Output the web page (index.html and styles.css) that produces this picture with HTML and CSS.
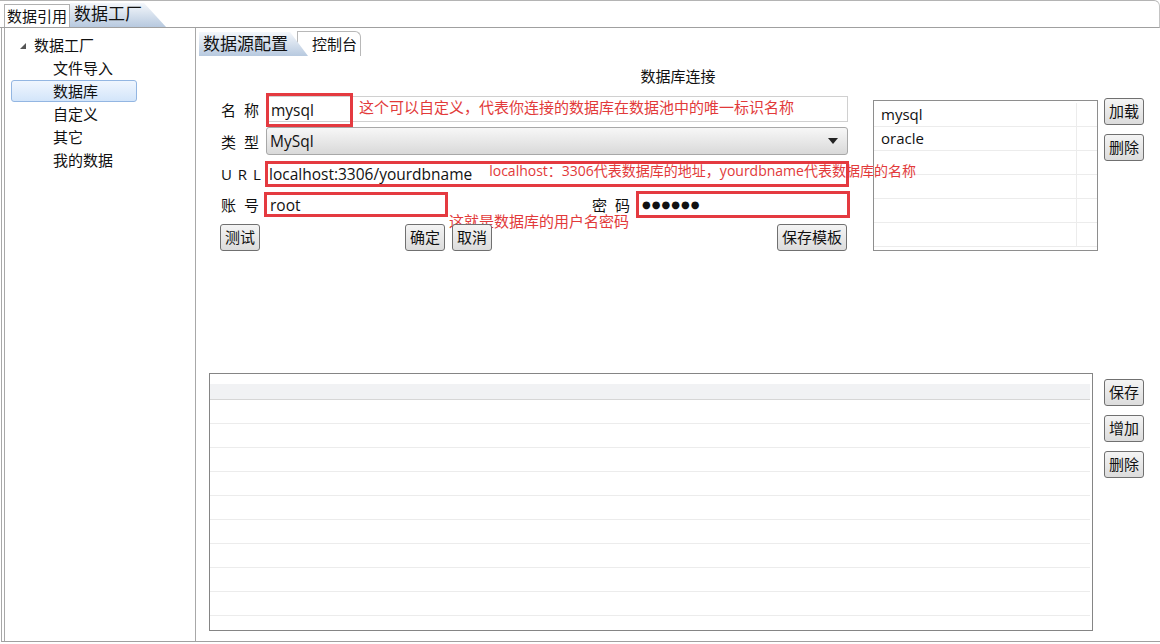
FILE: index.html
```html
<!DOCTYPE html>
<html lang="zh-CN">
<head>
    <meta charset="UTF-8">
    <title>数据工厂</title>
    <link rel="stylesheet" href="styles.css">
</head>
<body>

<div class="window">
    <div class="tabs">
        <div class="tab">数据引用</div>
        <div class="tab active">数据工厂</div>
    </div>

    <div class="body">
        <aside class="nav">
            <div class="tree-row tree-root"><span class="arrow"></span>数据工厂</div>
            <div class="tree-row tree-item">文件导入</div>
            <div class="tree-row tree-item selected">数据库</div>
            <div class="tree-row tree-item">自定义</div>
            <div class="tree-row tree-item">其它</div>
            <div class="tree-row tree-item">我的数据</div>
        </aside>

        <main class="work">
            <div class="subtabs">
                <div class="subtab active">数据源配置</div>
                <div class="subtab">控制台</div>
            </div>

            <div class="page">
                <h2 class="title">数据库连接</h2>

                <div class="conn">
                    <div class="form">
                        <div class="row r1">
                            <span class="label">名 称</span>
                            <div class="field plain">
                                <span class="mark">mysql</span>
                                <span class="note">这个可以自定义，代表你连接的数据库在数据池中的唯一标识名称</span>
                            </div>
                        </div>
                        <div class="row r2">
                            <span class="label">类 型</span>
                            <div class="field select">MySql<span class="caret"></span></div>
                        </div>
                        <div class="row r3">
                            <span class="label latin">U R L</span>
                            <div class="field marked url">
                                localhost:3306/yourdbname
                                <span class="note small">localhost：3306代表数据库的地址，yourdbname代表数据库的名称</span>
                            </div>
                        </div>
                        <div class="row r4">
                            <span class="label">账 号</span>
                            <div class="field marked account">root</div>
                            <span class="label right">密 码</span>
                            <div class="field marked pass"><span class="dots">●●●●●●</span></div>
                            <span class="note below">这就是数据库的用户名密码</span>
                        </div>
                        <div class="row r5">
                            <button class="btn">测试</button>
                            <button class="btn ok">确定</button>
                            <button class="btn cancel">取消</button>
                            <button class="btn save">保存模板</button>
                        </div>
                    </div>

                    <div class="list">
                        <div class="list-row"><span class="name">mysql</span><span class="col"></span></div>
                        <div class="list-row"><span class="name">oracle</span><span class="col"></span></div>
                        <div class="list-row"><span class="name"></span><span class="col"></span></div>
                        <div class="list-row"><span class="name"></span><span class="col"></span></div>
                        <div class="list-row"><span class="name"></span><span class="col"></span></div>
                        <div class="list-row"><span class="name"></span><span class="col"></span></div>
                    </div>

                    <div class="side top-side">
                        <button class="btn">加载</button>
                        <button class="btn">删除</button>
                    </div>
                </div>

                <div class="data">
                    <div class="table">
                        <div class="thead"></div>
                        <div class="trow"></div>
                        <div class="trow"></div>
                        <div class="trow"></div>
                        <div class="trow"></div>
                        <div class="trow"></div>
                        <div class="trow"></div>
                        <div class="trow"></div>
                        <div class="trow"></div>
                        <div class="trow"></div>
                    </div>
                    <div class="side low-side">
                        <button class="btn">保存</button>
                        <button class="btn">增加</button>
                        <button class="btn">删除</button>
                    </div>
                </div>
            </div>
        </main>
    </div>
</div>

</body>
</html>
```

FILE: styles.css
```css
* {
    margin: 0;
    padding: 0;
    box-sizing: border-box;
}

html, body {
    width: 1160px;
    height: 644px;
    overflow: hidden;
    background-color: #fff;
    color: #111;
    font-family: "Open Sans", "Noto Sans CJK SC", sans-serif;
}

.window {
    height: 642px;
    display: flex;
    flex-direction: column;
}

/* top tabs */
.tabs {
    height: 28px;
    display: flex;
    align-items: flex-end;
    padding-left: 4px;
    border-top: 1px solid #b4b4b4;
    border-right: 1px solid #c4c4c4;
    border-bottom: 1px solid #a0a0a0;
    border-top-right-radius: 6px;
}

.tab {
    height: 23px;
    line-height: 22px;
    font-size: 15px;
    padding: 0 2px;
    background-color: #fff;
    border: 1px solid #b0b0b0;
    border-bottom: none;
}

.tab.active {
    height: 24px;
    font-size: 17px;
    padding: 0 24px 0 4px;
    border: none;
    background: linear-gradient(#f4f7fb, #b7c9df);
    clip-path: polygon(0 0, calc(100% - 22px) 0, 100% 100%, 0 100%);
}

.body {
    flex: 1;
    display: flex;
    margin-left: 1px;
    border-left: 1px solid #a8a8a8;
    border-bottom: 1px solid #a0a0a0;
}

/* left tree */
.nav {
    width: 192px;
    margin-left: 2px;
    padding-top: 6px;
    border-left: 1px solid #a8a8a8;
    border-right: 1px solid #a8a8a8;
}

.tree-row {
    height: 23px;
    line-height: 23px;
    font-size: 15px;
}

.tree-root {
    padding-left: 15px;
}

.arrow {
    display: inline-block;
    width: 0;
    height: 0;
    margin-right: 8px;
    vertical-align: 2px;
    border-left: 6px solid transparent;
    border-bottom: 6px solid #555;
}

.tree-item {
    padding-left: 48px;
}

.tree-item.selected {
    width: 126px;
    height: 22px;
    line-height: 20px;
    margin: 0 0 1px 6px;
    padding-left: 41px;
    border: 1px solid #93b6e2;
    border-radius: 3px;
    background: linear-gradient(#f0f6fe, #d3e5fa);
}

/* right side */
.work {
    flex: 1;
    display: flex;
    flex-direction: column;
}

.subtabs {
    height: 28px;
    display: flex;
    align-items: flex-end;
    padding-left: 3px;
}

.subtab {
    height: 25px;
    line-height: 24px;
    font-size: 15px;
    padding: 0 3px 0 14px;
    margin-left: -11px;
    background-color: #fff;
    border: 1px solid #b8b8b8;
    border-bottom: none;
    border-top-right-radius: 6px;
}

.subtab.active {
    position: relative;
    z-index: 1;
    height: 24px;
    margin-left: 0;
    font-size: 17px;
    padding: 0 20px 0 4px;
    border: none;
    border-radius: 0;
    background: linear-gradient(#f4f7fb, #b7c9df);
    clip-path: polygon(0 0, calc(100% - 18px) 0, 100% 100%, 0 100%);
}

.page {
    flex: 1;
}

.title {
    margin-top: 10px;
    text-align: center;
    font-size: 15px;
    font-weight: 400;
    line-height: 20px;
}

.conn {
    display: flex;
    align-items: flex-start;
    margin-top: 10px;
    padding-left: 20px;
}

.form {
    width: 634px;
}

.row {
    position: relative;
    display: flex;
    align-items: center;
}

.r1 { height: 26px; margin-bottom: 5px; }
.r2 { height: 28px; margin-bottom: 6px; }
.r3 { height: 26px; margin-bottom: 4px; }
.r4 { height: 27px; margin-bottom: 6px; }
.r5 { height: 27px; padding-left: 4px; }

.label {
    width: 50px;
    padding-left: 5px;
    font-size: 15px;
    letter-spacing: 2px;
    white-space: nowrap;
}

.label.latin {
    letter-spacing: 1px;
}

.label.right {
    width: auto;
    margin-left: auto;
    margin-right: 4px;
    padding-left: 0;
}

.field {
    width: 582px;
    height: 100%;
    display: flex;
    align-items: center;
    padding-left: 3px;
    font-size: 15.5px;
    white-space: nowrap;
    border: 1px solid #d0d0d0;
}

.field.plain {
    padding-left: 0;
}

.mark {
    flex-shrink: 0;
    width: 87px;
    height: 34px;
    margin: 0 0 -1px -1px;
    padding-left: 2px;
    display: flex;
    align-items: center;
    border: 3px solid #e43a40;
}

.note {
    flex-shrink: 0;
    margin-left: 6px;
    color: #e23a3a;
    font-size: 15px;
    line-height: 18px;
    margin-top: -4px;
}

.note.small {
    margin-left: 17px;
    font-size: 14px;
    margin-top: -6px;
}

.note.below {
    position: absolute;
    left: 233px;
    top: 21px;
    margin: 0;
}

.field.select {
    height: 28px;
    border: 1px solid #a8a8a8;
    border-radius: 3px;
    background: linear-gradient(#f7f7f7, #d9d9d9);
}

.caret {
    width: 0;
    height: 0;
    margin-left: auto;
    margin-right: 9px;
    border-top: 6px solid #222;
    border-left: 5px solid transparent;
    border-right: 5px solid transparent;
}

.field.marked {
    border: 3px solid #e43a40;
    padding-left: 1px;
}

.field.url {
    width: 584px;
    margin-left: -1px;
}

.field.account {
    width: 184px;
    height: 25px;
    margin-left: -2px;
    padding-left: 3px;
}

.field.pass {
    width: 214px;
    height: 27px;
    padding-left: 3px;
}

.dots {
    font-family: "DejaVu Sans", sans-serif;
    font-size: 10px;
    letter-spacing: 1px;
}

.btn {
    height: 27px;
    padding: 0 4px;
    font: inherit;
    font-size: 15px;
    line-height: 25px;
    color: #111;
    border: 1px solid #707070;
    border-radius: 3px;
    background: linear-gradient(#f4f4f4, #dcdcdc);
}

.btn.ok { margin-left: 145px; }
.btn.cancel { margin-left: 7px; }
.btn.save { margin-left: auto; margin-right: 3px; }

/* saved connections */
.list {
    width: 225px;
    height: 151px;
    margin: 4px 0 0 23px;
    padding-top: 2px;
    border: 1px solid #8e8e8e;
}

.list-row {
    height: 24px;
    display: flex;
    border-bottom: 1px solid #ececec;
}

.list-row .name {
    flex: 1;
    padding-left: 7px;
    font-size: 15px;
    line-height: 22px;
}

.list-row .col {
    width: 21px;
    border-left: 1px solid #ececec;
}

.side {
    display: flex;
    flex-direction: column;
    gap: 9px;
}

.top-side {
    margin: 2px 0 0 6px;
}

/* table */
.data {
    display: flex;
    align-items: flex-start;
    margin-top: 122px;
    padding-left: 13px;
}

.table {
    width: 884px;
    height: 258px;
    padding: 10px 2px 0 0;
    border: 1px solid #858585;
}

.thead {
    height: 16px;
    background-color: #f1f2f4;
    border-bottom: 1px solid #d6d6d6;
}

.trow {
    height: 24px;
    border-bottom: 1px solid #ececec;
}

.low-side {
    margin: 6px 0 0 11px;
}
```
